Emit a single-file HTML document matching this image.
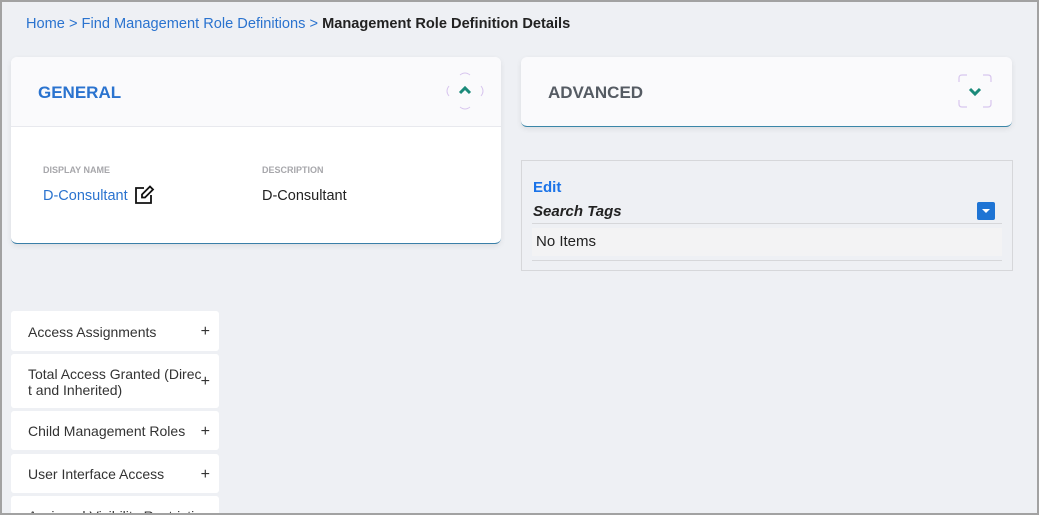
<!DOCTYPE html>
<html><head><style>
*{box-sizing:border-box;margin:0;padding:0}
body{width:1039px;height:515px;overflow:hidden;font-family:"Liberation Sans",sans-serif;}
#f{position:relative;width:1039px;height:515px;border:2px solid #a2a2a2;background:#eef0f4;overflow:hidden}
.abs{position:absolute}
.bc{left:24px;top:14px;font-size:14.6px;color:#2a73cf;white-space:nowrap}
.bc b{color:#222;font-weight:bold}
.card{background:#fafafc;border-radius:6px;box-shadow:0 2px 6px rgba(0,0,0,.08)}
.gen{left:9px;top:55px;width:490px;height:187px;background:#fff;border-radius:6px;box-shadow:0 2px 6px rgba(0,0,0,.08);overflow:hidden;border-bottom:1px solid #3a7fa8}
.gh{height:70px;background:#fafafc;border-bottom:1px solid #e8e9ee;position:relative}
.title{position:absolute;left:27px;top:26px;font-size:17px;font-weight:bold}
.lbl{font-size:9px;color:#a7a7ab;font-weight:bold}
.side{left:9px;width:208px;background:#fff;border-radius:3px;font-size:14px;color:#333;padding-left:17px}
.side span{position:absolute;right:9px;top:50%;transform:translateY(-45%);font-size:16px}
</style></head><body><div id="f">
<div class="abs bc">Home &gt; Find Management Role Definitions &gt; <b>Management Role Definition Details</b></div>

<div class="abs gen">
 <div class="gh"><div class="title" style="color:#2a73cf">GENERAL</div>
  <svg class="abs" style="left:432px;top:12px" width="44" height="44" viewBox="0 0 44 44" fill="none" stroke="#d8c6ee" stroke-width="1">
   <path d="M17 6 Q22 2 27 6"/><path d="M17 38 Q22 42 27 38"/><path d="M6 17 Q2 22 6 27"/><path d="M38 17 Q42 22 38 27"/>
   <path d="M17 24 L22 19 L27 24" stroke="#1b8a7a" stroke-width="3"/>
  </svg>
 </div>
 <div class="abs lbl" style="left:32px;top:108px">DISPLAY NAME</div>
 <div class="abs lbl" style="left:251px;top:108px">DESCRIPTION</div>
 <div class="abs" style="left:32px;top:131px;font-size:14.5px;color:#2a73cf">D-Consultant</div>
 <svg class="abs" style="left:122px;top:128px" width="22" height="20" viewBox="0 0 22 20" fill="none" stroke="#111" stroke-width="1.8"><path d="M11 3H3v15h15v-8"/><path d="M17 1.5l3 3-8 8H9v-3z"/></svg>
 <div class="abs" style="left:251px;top:131px;font-size:14.5px;color:#222">D-Consultant</div>
</div>

<div class="abs card" style="left:519px;top:55px;width:491px;height:70px;border-bottom:1px solid #3a86a8">
 <div class="title" style="color:#555b63">ADVANCED</div>
 <svg class="abs" style="left:437px;top:17px" width="34" height="34" viewBox="0 0 34 34" fill="none" stroke="#d8c6ee" stroke-width="1.2">
  <path d="M1 8V4Q1 1 4 1h5"/><path d="M25 1h5q3 0 3 3v4"/><path d="M1 26v4q0 3 3 3h5"/><path d="M25 33h5q3 0 3-3v-4"/>
  <path d="M12 15l5 5 5-5" stroke="#1b8a7a" stroke-width="3"/>
 </svg>
</div>

<div class="abs" style="left:519px;top:158px;width:492px;height:111px;border:1px solid #d6d7da">
 <div class="abs" style="left:11px;top:18px;font-size:15px;color:#1a73e8;font-weight:bold">Edit</div>
 <div class="abs" style="left:11px;top:42px;font-size:15px;color:#222;font-style:italic;font-weight:bold">Search Tags</div>
 <div class="abs" style="left:455px;top:41px;width:18px;height:18px;background:#1e74d4;border-radius:2px"><div style="position:absolute;left:5px;top:7px;border-left:4px solid transparent;border-right:4px solid transparent;border-top:4px solid #fff"></div></div>
 <div class="abs" style="left:10px;top:62px;width:470px;height:1px;background:#d6d7da"></div>
 <div class="abs" style="left:10px;top:67px;width:470px;height:28px;background:#f3f3f4;font-size:15px;color:#222;padding:5px 4px">No Items</div>
 <div class="abs" style="left:10px;top:99px;width:470px;height:1px;background:#d6d7da"></div>
</div>

<div class="abs side" style="top:309px;height:40px;padding-top:13px">Access Assignments<span>+</span></div>
<div class="abs side" style="top:352px;height:54px;padding-top:12px;line-height:16px">Total Access Granted (Direc<br>t and Inherited)<span>+</span></div>
<div class="abs side" style="top:409px;height:39px;padding-top:12px">Child Management Roles<span>+</span></div>
<div class="abs side" style="top:452px;height:39px;padding-top:12px">User Interface Access<span>+</span></div>
<div class="abs side" style="top:494px;height:40px;padding-top:12px">Assigned Visibility Restricti</div>
</div></body></html>
